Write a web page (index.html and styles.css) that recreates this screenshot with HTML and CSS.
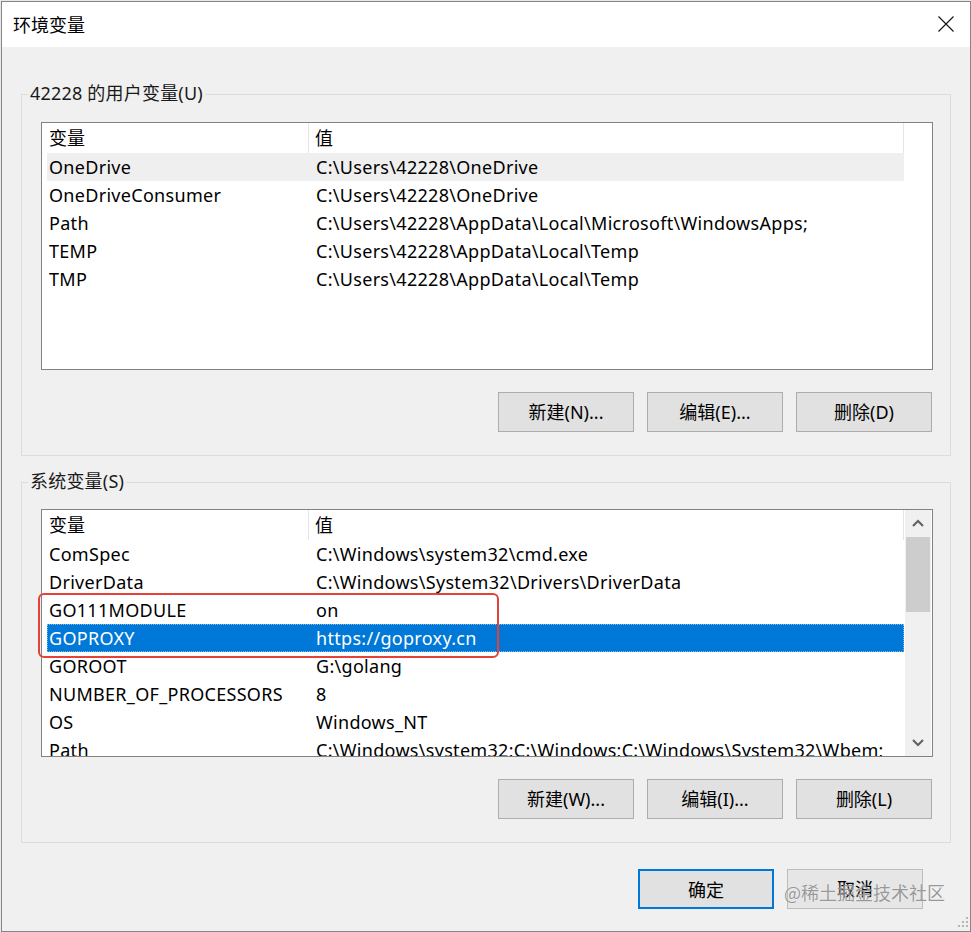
FILE: index.html
```html
<!DOCTYPE html>
<html lang="zh-CN">
<head>
<meta charset="utf-8">
<title>环境变量</title>
<link rel="stylesheet" href="styles.css">
</head>
<body>
<div class="window">
  <div class="titlebar">
    <span class="title">环境变量</span>
    <svg class="close" width="16" height="16" viewBox="0 0 16 16"><path d="M0.5 0.5 L15.5 15.5 M15.5 0.5 L0.5 15.5" stroke="#111" stroke-width="1.1" fill="none"/></svg>
  </div>
  <div class="client">
    <section class="group group-user">
      <div class="group-label">42228 的用户变量(U)</div>
      <div class="listbox">
        <div class="list-content">
          <div class="lv-header"><div class="c1">变量</div><div class="c2">值</div></div>
          <div class="row hover"><div class="c1">OneDrive</div><div class="c2">C:\Users\42228\OneDrive</div></div>
          <div class="row"><div class="c1">OneDriveConsumer</div><div class="c2">C:\Users\42228\OneDrive</div></div>
          <div class="row"><div class="c1">Path</div><div class="c2">C:\Users\42228\AppData\Local\Microsoft\WindowsApps;</div></div>
          <div class="row"><div class="c1">TEMP</div><div class="c2">C:\Users\42228\AppData\Local\Temp</div></div>
          <div class="row"><div class="c1">TMP</div><div class="c2">C:\Users\42228\AppData\Local\Temp</div></div>
        </div>
      </div>
      <div class="btn-row">
        <button class="btn">新建(N)...</button>
        <button class="btn">编辑(E)...</button>
        <button class="btn">删除(D)</button>
      </div>
    </section>

    <section class="group group-sys">
      <div class="group-label">系统变量(S)</div>
      <div class="listbox">
        <div class="list-content">
          <div class="lv-header"><div class="c1">变量</div><div class="c2">值</div></div>
          <div class="row"><div class="c1">ComSpec</div><div class="c2">C:\Windows\system32\cmd.exe</div></div>
          <div class="row"><div class="c1">DriverData</div><div class="c2">C:\Windows\System32\Drivers\DriverData</div></div>
          <div class="row"><div class="c1">GO111MODULE</div><div class="c2">on</div></div>
          <div class="row selected"><div class="c1">GOPROXY</div><div class="c2">https://goproxy.cn</div></div>
          <div class="row"><div class="c1">GOROOT</div><div class="c2">G:\golang</div></div>
          <div class="row"><div class="c1">NUMBER_OF_PROCESSORS</div><div class="c2">8</div></div>
          <div class="row"><div class="c1">OS</div><div class="c2">Windows_NT</div></div>
          <div class="row"><div class="c1">Path</div><div class="c2">C:\Windows\system32;C:\Windows;C:\Windows\System32\Wbem;</div></div>
        </div>
        <div class="scrollbar">
          <div class="sb-arrow">
            <svg width="12" height="8" viewBox="0 0 12 8"><polyline points="1,7 6,2 11,7" fill="none" stroke="#606060" stroke-width="2"/></svg>
          </div>
          <div class="sb-thumb"></div>
          <div class="sb-track"></div>
          <div class="sb-arrow">
            <svg width="12" height="8" viewBox="0 0 12 8"><polyline points="1,1 6,6 11,1" fill="none" stroke="#606060" stroke-width="2"/></svg>
          </div>
        </div>
      </div>
      <div class="btn-row">
        <button class="btn">新建(W)...</button>
        <button class="btn">编辑(I)...</button>
        <button class="btn">删除(L)</button>
      </div>
    </section>

    <div class="dialog-buttons">
      <button class="btn btn-default">确定</button>
      <button class="btn btn-cancel">取消</button>
    </div>
  </div>

  <div class="highlight-box"></div>
  <div class="watermark">@稀土掘金技术社区</div>
  <svg class="grip" width="13" height="13" viewBox="0 0 13 13">
    <rect x="10" y="0" width="2" height="2" fill="#b5b5b5"/>
    <rect x="6" y="4" width="2" height="2" fill="#b5b5b5"/>
    <rect x="10" y="4" width="2" height="2" fill="#b5b5b5"/>
    <rect x="2" y="8" width="2" height="2" fill="#b5b5b5"/>
    <rect x="6" y="8" width="2" height="2" fill="#b5b5b5"/>
    <rect x="10" y="8" width="2" height="2" fill="#b5b5b5"/>
  </svg>
</div>
</body>
</html>
```

FILE: styles.css
```css
* { box-sizing: border-box; }

html, body {
  margin: 0;
  padding: 0;
}

body {
  width: 971px;
  height: 932px;
  overflow: hidden;
  background: #e9e9e9;
  font-family: "Noto Sans", "Noto Sans CJK SC", sans-serif;
  font-size: 18px;
  color: #000;
}

.window {
  position: relative;
  width: 970px;
  height: 931px;
  margin: 1px 0 0 1px;
  border: 1px solid #858585;
  background: #f0f0f0;
  display: flex;
  flex-direction: column;
}

.titlebar {
  height: 45px;
  flex: none;
  background: #fff;
  display: flex;
  align-items: center;
  justify-content: space-between;
  padding: 0 16px 0 11px;
}

.title {
  font-size: 18px;
  line-height: 24px;
  color: #000;
}

.close {
  display: block;
  margin-top: -2px;
}

.client {
  flex: 1;
  display: flex;
  flex-direction: column;
}

.group {
  position: relative;
  width: 930px;
  margin-left: 19px;
  border: 1px solid #dcdcdc;
  padding: 27px 17px 0 19px;
}

.group-user {
  margin-top: 47px;
  height: 362px;
}

.group-sys {
  margin-top: 26px;
  height: 361px;
  padding-top: 26px;
}

.group-label {
  position: absolute;
  top: -14px;
  left: 6px;
  padding: 0 2px;
  background: #f0f0f0;
  line-height: 24px;
  color: #1a1a1a;
  letter-spacing: 0.2px;
}

.listbox {
  width: 892px;
  height: 248px;
  border: 1px solid #828282;
  background: #fff;
  display: flex;
  overflow: hidden;
}

.list-content {
  flex: 1;
  padding-left: 5px;
  overflow: hidden;
}

.lv-header {
  display: flex;
  height: 30px;
  line-height: 30px;
  margin-top: 0;
}

.lv-header .c1 {
  width: 262px;
  padding-left: 2px;
  border-right: 1px solid #e5e5e5;
}

.lv-header .c2 {
  width: 595px;
  padding-left: 6px;
  border-right: 1px solid #e5e5e5;
}

.row {
  display: flex;
  height: 28px;
  line-height: 28px;
  width: 857px;
  white-space: nowrap;
  letter-spacing: 0.3px;
}

.row .c1 {
  width: 262px;
  padding-left: 2px;
  flex: none;
}

.row .c2 {
  width: 595px;
  padding-left: 7px;
  flex: none;
  overflow: hidden;
}

.row.hover {
  background: #efefef;
}

.row.selected {
  background: #0078d7;
  color: #fff;
  outline: 1px dotted #7fb6e6;
  outline-offset: -1px;
}

.scrollbar {
  width: 26px;
  flex: none;
  margin-right: 1px;
  background: #f0f0f0;
  display: flex;
  flex-direction: column;
}

.sb-arrow {
  height: 26px;
  display: flex;
  align-items: center;
  justify-content: center;
  flex: none;
}

.sb-thumb {
  height: 75px;
  margin: 1px 1px 0 1px;
  background: #cdcdcd;
  flex: none;
}

.sb-track {
  flex: 1;
}

.btn-row {
  display: flex;
  justify-content: flex-end;
  gap: 13px;
  margin-top: 22px;
  width: 891px;
}

.btn {
  width: 136px;
  height: 40px;
  border: 1px solid #adadad;
  background: #e1e1e1;
  font-family: "Noto Sans", "Noto Sans CJK SC", sans-serif;
  font-size: 18px;
  color: #000;
  padding: 0;
  margin: 0;
  line-height: 38px;
}

.dialog-buttons {
  display: flex;
  justify-content: flex-end;
  gap: 13px;
  margin-top: 26px;
  padding-right: 47px;
}

.btn-default {
  border: 2px solid #0078d7;
}

.btn-cancel {
  background: #e6e6e6;
  border-color: #bdbdbd;
}

.highlight-box {
  position: absolute;
  left: 36px;
  top: 591px;
  width: 461px;
  height: 65px;
  border: 2px solid #e5403a;
  border-radius: 6px;
}

.watermark {
  position: absolute;
  left: 782px;
  top: 878px;
  font-family: "Noto Sans CJK SC", sans-serif;
  font-size: 18px;
  line-height: 24px;
  color: rgba(120, 120, 120, 0.75);
  text-shadow: 0 0 1px rgba(255,255,255,0.8);
}

.grip {
  position: absolute;
  right: 1px;
  bottom: 1px;
}
```
